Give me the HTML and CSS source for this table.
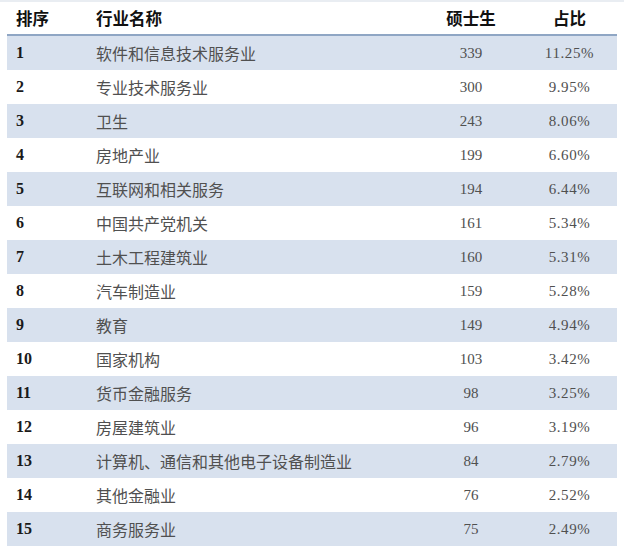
FILE: index.html
```html
<!DOCTYPE html>
<html lang="zh">
<head>
<meta charset="utf-8">
<link rel="stylesheet" href="styles.css">
</head>
<body>
<div class="table">
  <div class="row head">
    <div class="c rank">排序</div>
    <div class="c name">行业名称</div>
    <div class="c num">硕士生</div>
    <div class="c pct">占比</div>
  </div>
  <div class="row odd"><div class="c rank">1</div><div class="c name">软件和信息技术服务业</div><div class="c num">339</div><div class="c pct">11.25%</div></div>
  <div class="row"><div class="c rank">2</div><div class="c name">专业技术服务业</div><div class="c num">300</div><div class="c pct">9.95%</div></div>
  <div class="row odd"><div class="c rank">3</div><div class="c name">卫生</div><div class="c num">243</div><div class="c pct">8.06%</div></div>
  <div class="row"><div class="c rank">4</div><div class="c name">房地产业</div><div class="c num">199</div><div class="c pct">6.60%</div></div>
  <div class="row odd"><div class="c rank">5</div><div class="c name">互联网和相关服务</div><div class="c num">194</div><div class="c pct">6.44%</div></div>
  <div class="row"><div class="c rank">6</div><div class="c name">中国共产党机关</div><div class="c num">161</div><div class="c pct">5.34%</div></div>
  <div class="row odd"><div class="c rank">7</div><div class="c name">土木工程建筑业</div><div class="c num">160</div><div class="c pct">5.31%</div></div>
  <div class="row"><div class="c rank">8</div><div class="c name">汽车制造业</div><div class="c num">159</div><div class="c pct">5.28%</div></div>
  <div class="row odd"><div class="c rank">9</div><div class="c name">教育</div><div class="c num">149</div><div class="c pct">4.94%</div></div>
  <div class="row"><div class="c rank">10</div><div class="c name">国家机构</div><div class="c num">103</div><div class="c pct">3.42%</div></div>
  <div class="row odd"><div class="c rank">11</div><div class="c name">货币金融服务</div><div class="c num">98</div><div class="c pct">3.25%</div></div>
  <div class="row"><div class="c rank">12</div><div class="c name">房屋建筑业</div><div class="c num">96</div><div class="c pct">3.19%</div></div>
  <div class="row odd"><div class="c rank">13</div><div class="c name">计算机、通信和其他电子设备制造业</div><div class="c num">84</div><div class="c pct">2.79%</div></div>
  <div class="row"><div class="c rank">14</div><div class="c name">其他金融业</div><div class="c num">76</div><div class="c pct">2.52%</div></div>
  <div class="row odd"><div class="c rank">15</div><div class="c name">商务服务业</div><div class="c num">75</div><div class="c pct">2.49%</div></div>
</div>
</body>
</html>
```
FILE: styles.css
```css
html, body {
  margin: 0;
  padding: 0;
  background: #ffffff;
}
body {
  border-top: 2px solid #e9edf2;
}
.table {
  margin-left: 7px;
  width: 610px;
  font-family: "Noto Sans CJK SC", sans-serif;
}
.row {
  display: grid;
  grid-template-columns: 89px 324px 102px 95px;
  height: 34px;
  align-items: center;
}
.row.head {
  height: 32px;
  border-bottom: 2px solid #8fa6c4;
}
.row.odd {
  background: #d8e1ee;
}
.c {
  white-space: nowrap;
}
.rank {
  padding-left: 9px;
  font-family: "Liberation Serif", serif;
  font-weight: bold;
  font-size: 16px;
  color: #1a1a1a;
}
.name {
  font-size: 16px;
  color: #505050;
}
.num, .pct {
  text-align: center;
  font-family: "Liberation Serif", serif;
  font-size: 15px;
  color: #505050;
}
.pct {
  letter-spacing: 0.6px;
}
.head .c {
  font-family: "Noto Sans CJK SC", sans-serif;
  font-weight: bold;
  font-size: 16.5px;
  color: #111111;
  letter-spacing: 0;
}
```
